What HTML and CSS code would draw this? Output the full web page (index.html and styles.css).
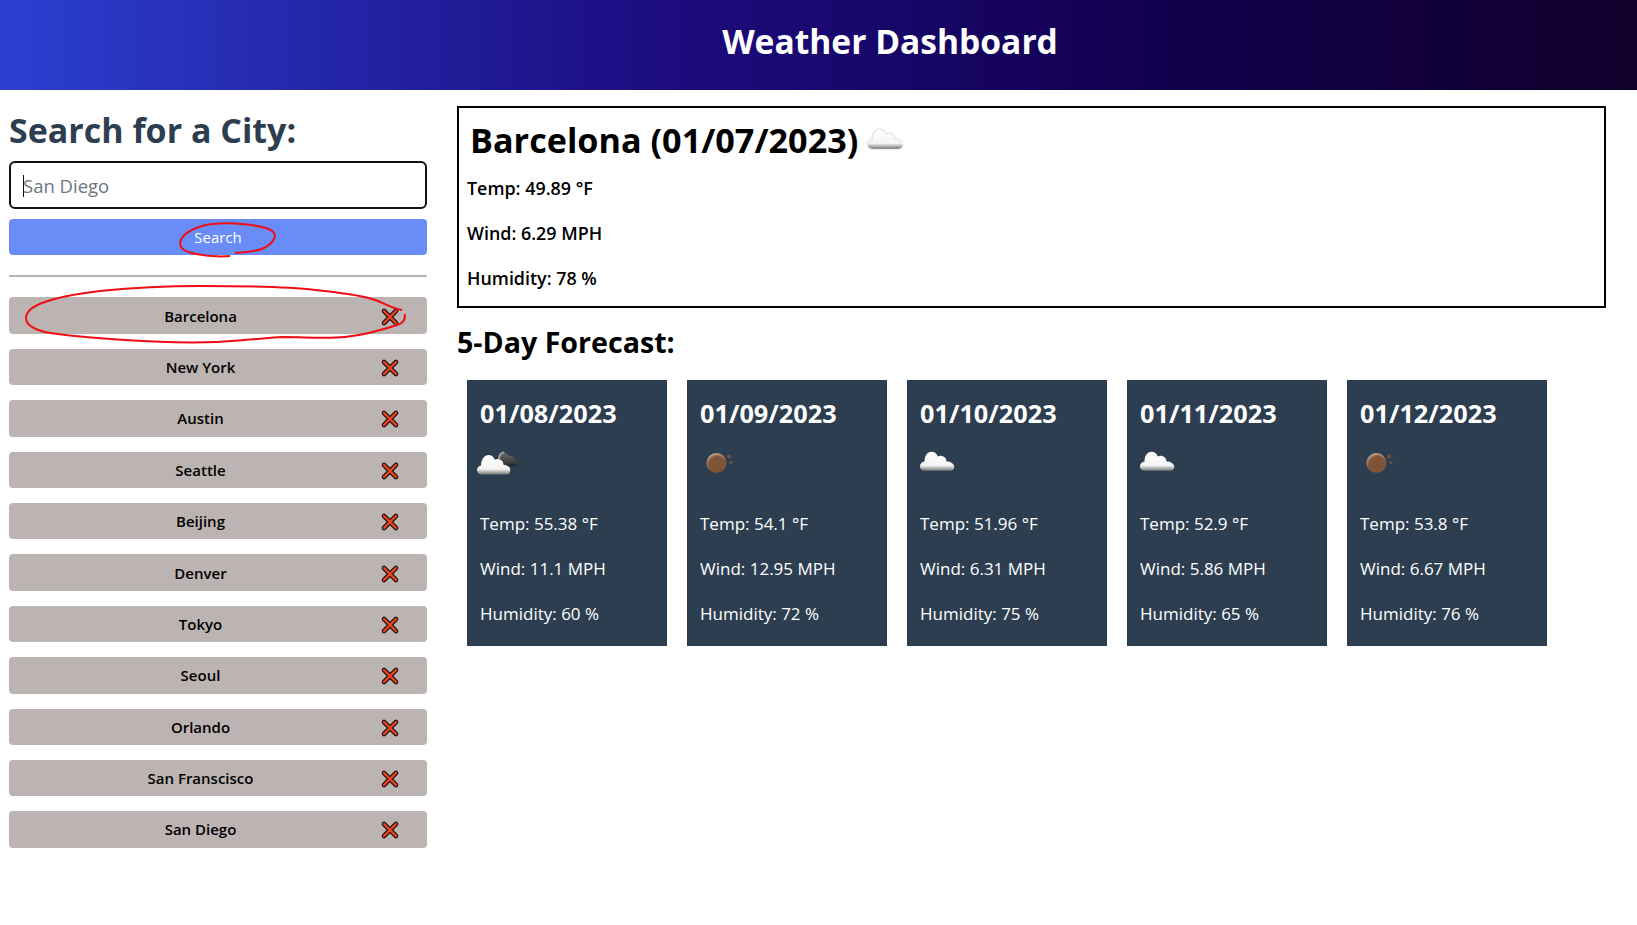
FILE: index.html
```html
<!DOCTYPE html>
<html>
  <head>
    <meta charset="utf-8">
    <title>Weather Dashboard</title>
    <link rel="stylesheet" href="styles.css">
  </head>
  <body>
    <svg class="defs" width="0" height="0">
      <defs>
        <linearGradient id="white-cloud" x1="0" y1="0" x2="0" y2="1">
          <stop offset="0" stop-color="#ffffff"/>
          <stop offset="0.72" stop-color="#f4f4f4"/>
          <stop offset="0.86" stop-color="#b5b5b5"/>
          <stop offset="1" stop-color="#777777"/>
        </linearGradient>
        <linearGradient id="dark-cloud" x1="0" y1="0" x2="0" y2="1">
          <stop offset="0" stop-color="#666666"/>
          <stop offset="0.75" stop-color="#3c3c3c"/>
          <stop offset="1" stop-color="#1c1c1c"/>
        </linearGradient>
        <radialGradient id="moon" cx="0.55" cy="0.62" r="0.62">
          <stop offset="0" stop-color="#7d5233"/>
          <stop offset="0.72" stop-color="#80563a"/>
          <stop offset="1" stop-color="#d3ab90"/>
        </radialGradient>
        <symbol id="icon-cloud" viewBox="0 0 50 50">
          <path fill="url(#white-cloud)" d="M13 33.7C9.5 33.7 8 31.5 8 29.5C8 26.8 10 25 12.5 24.6C12.5 18.5 15.5 14.7 19.5 14.7C22.5 14.7 24.8 16.5 25.8 19.6C26.8 18.8 28.5 18.6 30 19C33 19.5 34.5 22 34.5 24.5C37 24 42.3 26 42.3 30C42.3 32.5 40.5 33.7 38 33.7Z"/>
        </symbol>
        <symbol id="icon-clouds" viewBox="0 0 50 50">
          <path fill="#9a9a9a" d="M26 22C26 17 29 14.5 32 14.5L33 17L29 22Z"/>
          <path fill="url(#dark-cloud)" d="M29 29C27 26 27.5 20 29.5 18C32 15.5 36 16.5 37.5 19C40 18.5 42 20 42.5 22C44.5 22.5 46 24 46 26C46 28 45 29 43 29Z"/>
          <path fill="url(#white-cloud)" d="M10 37.5C7 37.5 5 35.5 5 33C5 30.3 7 29 9 28.5C9 22.5 12.5 18 16.5 18C19.5 18 21.8 20 22.8 22.8C23.8 22 25.5 21.8 27 22.2C30 22.8 31.5 25 31.5 27.8C34 27.3 38.3 29.5 38.3 33.5C38.3 36.2 36.5 37.5 34 37.5Z"/>
        </symbol>
        <symbol id="icon-moon" viewBox="0 0 50 50">
          <circle cx="24.5" cy="26" r="10" fill="url(#moon)"/>
          <circle cx="37" cy="19.5" r="2" fill="#6f5244"/>
          <circle cx="39" cy="25.5" r="1.6" fill="#6f5244"/>
        </symbol>
        <symbol id="icon-x" viewBox="0 0 24 24">
          <path d="M6 6L18 18M18 6L6 18" stroke="#1d1512" stroke-width="4.6" stroke-linecap="round"/>
          <path d="M6 6L18 18M18 6L6 18" stroke="#f4421e" stroke-width="2.4" stroke-linecap="round"/>
        </symbol>
      </defs>
    </svg>

    <header class="topbar">Weather Dashboard</header>

    <div class="layout">
      <aside class="sidebar">
        <h2 class="search-title">Search for a City:</h2>
        <div class="search-input"><span class="caret"></span><span class="placeholder">San Diego</span></div>
        <button class="search-btn">Search</button>
        <hr class="divider">
        <div class="city"><span class="city-name">Barcelona</span><svg class="x"><use href="#icon-x"/></svg></div>
        <div class="city"><span class="city-name">New York</span><svg class="x"><use href="#icon-x"/></svg></div>
        <div class="city"><span class="city-name">Austin</span><svg class="x"><use href="#icon-x"/></svg></div>
        <div class="city"><span class="city-name">Seattle</span><svg class="x"><use href="#icon-x"/></svg></div>
        <div class="city"><span class="city-name">Beijing</span><svg class="x"><use href="#icon-x"/></svg></div>
        <div class="city"><span class="city-name">Denver</span><svg class="x"><use href="#icon-x"/></svg></div>
        <div class="city"><span class="city-name">Tokyo</span><svg class="x"><use href="#icon-x"/></svg></div>
        <div class="city"><span class="city-name">Seoul</span><svg class="x"><use href="#icon-x"/></svg></div>
        <div class="city"><span class="city-name">Orlando</span><svg class="x"><use href="#icon-x"/></svg></div>
        <div class="city"><span class="city-name">San Franscisco</span><svg class="x"><use href="#icon-x"/></svg></div>
        <div class="city"><span class="city-name">San Diego</span><svg class="x"><use href="#icon-x"/></svg></div>
      </aside>

      <main class="content">
        <section class="today">
          <h2 class="today-title">Barcelona (01/07/2023)<svg class="icon"><use href="#icon-cloud"/></svg></h2>
          <p>Temp: 49.89 °F</p>
          <p>Wind: 6.29 MPH</p>
          <p>Humidity: 78 %</p>
        </section>

        <h3 class="forecast-title">5-Day Forecast:</h3>

        <div class="cards">
          <div class="card">
            <h4>01/08/2023</h4>
            <svg class="icon"><use href="#icon-clouds"/></svg>
            <p>Temp: 55.38 °F</p>
            <p>Wind: 11.1 MPH</p>
            <p>Humidity: 60 %</p>
          </div>
          <div class="card">
            <h4>01/09/2023</h4>
            <svg class="icon"><use href="#icon-moon"/></svg>
            <p>Temp: 54.1 °F</p>
            <p>Wind: 12.95 MPH</p>
            <p>Humidity: 72 %</p>
          </div>
          <div class="card">
            <h4>01/10/2023</h4>
            <svg class="icon"><use href="#icon-cloud"/></svg>
            <p>Temp: 51.96 °F</p>
            <p>Wind: 6.31 MPH</p>
            <p>Humidity: 75 %</p>
          </div>
          <div class="card">
            <h4>01/11/2023</h4>
            <svg class="icon"><use href="#icon-cloud"/></svg>
            <p>Temp: 52.9 °F</p>
            <p>Wind: 5.86 MPH</p>
            <p>Humidity: 65 %</p>
          </div>
          <div class="card">
            <h4>01/12/2023</h4>
            <svg class="icon"><use href="#icon-moon"/></svg>
            <p>Temp: 53.8 °F</p>
            <p>Wind: 6.67 MPH</p>
            <p>Humidity: 76 %</p>
          </div>
        </div>
      </main>
    </div>

    <!-- red pen marks drawn over the screenshot -->
    <svg class="scribble" width="1637" height="925">
      <path d="M230 256C220 257 203 256 192 253C183 251 180 248 180 243C181 238 184 234 190 231C197 227 204 225 212 224C222 223 232 223 242 224C252 225 260 226 266 228C272 230 275 232 275 236C274 241 270 245 264 248C258 251 250 252 235 253"/>
      <path d="M402 310C393 309 385 303 372 299C355 294 335 292 315 290C290 287 250 286 200 286C165 286 130 288 100 291C75 294 55 298 42 303C32 307 26 312 26 318C26 324 33 329 45 332C65 336 95 338 125 340C155 342 190 343 217 342C240 341 262 338 283 337C305 337 325 339 345 337C365 335 385 329 397 325C403 323 405 321 405 314"/>
    </svg>
  </body>
</html>
```

FILE: styles.css
```css
* { box-sizing: border-box; }

body {
  margin: 0;
  font-family: "Open Sans", "Noto Sans", sans-serif;
  color: #000;
  background: #fff;
}

.defs { position: absolute; }

.topbar {
  height: 90px;
  padding-left: 143px;
  line-height: 83px;
  text-align: center;
  color: #fff;
  font-size: 33.6px;
  font-weight: 700;
  background: linear-gradient(90deg, #2b3fd0 0%, #1c0c80 40%, #12004f 70%, #10002b 100%);
}

.layout { display: flex; }

.sidebar {
  width: 418px;
  margin-left: 9px;
  flex-shrink: 0;
}

.search-title {
  margin: 19px 0 9px;
  font-size: 34px;
  line-height: 43px;
  font-weight: 700;
  color: #2c3e50;
}

.search-input {
  display: flex;
  align-items: center;
  height: 48px;
  padding: 1px 0 0 12px;
  border: 2px solid #111;
  border-radius: 6px;
  font-size: 18.5px;
  color: #6c757d;
}

.caret {
  width: 1px;
  height: 22px;
  margin-right: -1px;
  background: #111;
}

.search-btn {
  display: block;
  width: 100%;
  height: 36px;
  margin-top: 10px;
  border: 0;
  border-radius: 4px;
  background: #6a8cf7;
  color: #fff;
  font: 15px "Open Sans", sans-serif;
}

.divider {
  height: 2px;
  margin: 20px 0 20.4px;
  border: 0;
  background: #b9b3b1;
}

.city {
  display: flex;
  align-items: center;
  gap: 12px;
  height: 36.4px;
  margin-bottom: 15px;
  padding: 0 25px 0 26px;
  border-radius: 4px;
  background: #bcb4b2;
  font-size: 15px;
  font-weight: 600;
}

.city-name {
  flex: 1;
  text-align: center;
}

.x {
  width: 24px;
  height: 24px;
  margin-top: 2px;
  flex-shrink: 0;
}

.content {
  width: 1148px;
  margin-left: 31px;
  padding-top: 16px;
}

.today {
  height: 202px;
  margin-left: -1px;
  padding: 7px 7px 0 8px;
  border: 2px solid #000;
}

.today-title {
  display: flex;
  align-items: center;
  height: 50px;
  margin: 0 0 10px;
  padding: 0 0 1px 3px;
  font-size: 34.2px;
  font-weight: 700;
}

.today-title .icon {
  margin-left: 2px;
  filter: drop-shadow(0 0 1px #b5b5b5);
}

.today p {
  margin: 0 0 18px;
  font-size: 17.9px;
  line-height: 27px;
  font-weight: 600;
}

.icon {
  display: block;
  width: 50px;
  height: 50px;
  flex-shrink: 0;
}

.forecast-title {
  margin: 16px 0 20px -1px;
  font-size: 28.6px;
  line-height: 36px;
  font-weight: 700;
}

.cards {
  display: flex;
  gap: 20px;
  padding-left: 9px;
}

.card {
  width: 200px;
  height: 266px;
  padding: 20px 13px 0;
  background: #2c3e50;
  color: #fff;
}

.card h4 {
  margin: 0 0 10px;
  font-size: 25.3px;
  line-height: 27px;
  font-weight: 700;
}

.card .icon { margin: 0 0 23px -8px; }

.card p {
  margin: 0 0 18px;
  font-size: 17px;
  line-height: 27px;
}

.scribble {
  position: absolute;
  left: 0;
  top: 0;
  pointer-events: none;
}

.scribble path {
  fill: none;
  stroke: #f10d14;
  stroke-width: 2;
}
```
